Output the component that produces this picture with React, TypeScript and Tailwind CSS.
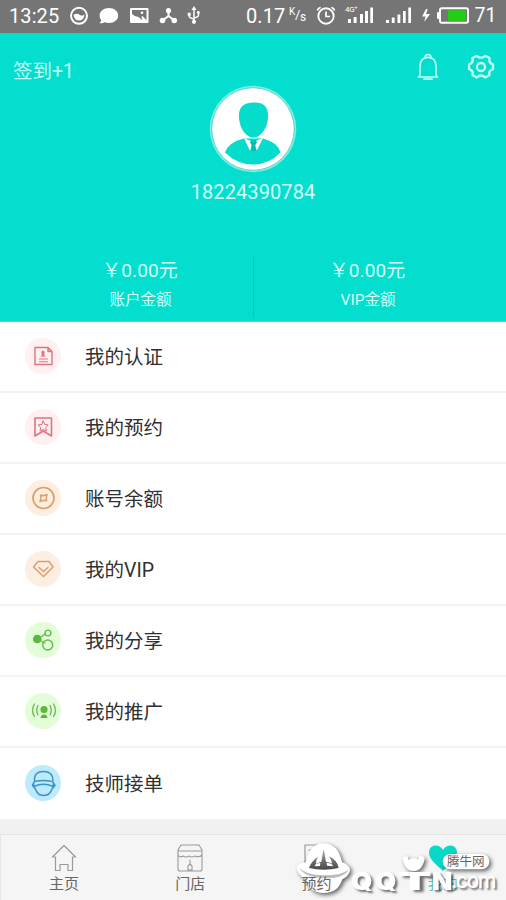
import React from "react";

type IconProps = { children: React.ReactNode; w?: number; h?: number; className?: string };

function Draw({ children, w = 36, h = 36, className = "" }: IconProps) {
  return (
    <svg
      width={w}
      height={h}
      viewBox={`0 0 ${w} ${h}`}
      fill="none"
      stroke="currentColor"
      strokeLinecap="round"
      strokeLinejoin="round"
      className={`block shrink-0 ${className}`}
    >
      {children}
    </svg>
  );
}

function StatusBar() {
  return (
    <div className="relative h-[33px] bg-[#757575] text-white">
      <span className="absolute left-[9px] top-[4px] text-[20px] leading-[24px] tracking-[0.1px]">13:25</span>
      <svg className="absolute inset-0" width="506" height="33" viewBox="0 0 506 33" fill="none" stroke="#fff">
        <circle cx="79" cy="15.8" r="8" strokeWidth="2" />
        <path d="M73.500 15 Q76.500 12.500 80 15 Q82.500 16.500 84.500 14.500 Q84 20.500 79 20.500 Q74.500 20.500 73.500 15Z" fill="#fff" stroke="none" />
        <path d="M109 8 c5.200 0 9.200 3.200 9.200 7.500 s-4 7.500 -9.200 7.500 c-1.500 0 -3 -.2 -4.200 -.8 c-1.500 1 -3.500 1.200 -5.300 .8 c1.200 -1 1.700 -2 1.600 -3 c-1 -1.300 -1.500 -2.800 -1.500 -4.500 c0 -4.300 4.200 -7.500 9.400 -7.500Z" fill="#fff" stroke="none" />
        <path fillRule="evenodd" d="M131 8H147.500Q148.500 8 148.500 9V22Q148.500 23 147.500 23H131Q130 23 130 22V9Q130 8 131 8ZM132 10H146.500V20L143 16.500L141.500 16L142 20L138.500 17Q135 17 132 14Z" fill="#fff" stroke="none" />
        <circle cx="142" cy="12.800" r="1.300" fill="#fff" stroke="none" />
        <path d="M168.500 10V16L162.500 20.500M168.500 16L174.500 20.500" strokeWidth="2" />
        <g fill="#fff" stroke="none">
          <circle cx="168.500" cy="10.500" r="2.600" /><circle cx="162.500" cy="20.500" r="2.800" /><circle cx="174.300" cy="20.500" r="2.800" />
          <path d="M194 6l2.500 4h-5zM187.700 12.800h3v3h-3z" /><circle cx="194" cy="21.800" r="2.100" /><circle cx="198.300" cy="12.500" r="1.400" />
        </g>
        <path d="M194 9V22M189.200 15V16Q189.200 18 194 19M198.500 13V15Q198.500 17 194 18" strokeWidth="1.500" />
        <circle cx="326" cy="16" r="7.700" strokeWidth="1.900" />
        <path d="M326 11.500V16.500H330M317.500 10.500Q318 8 320.700 7.500M331.300 7.500Q334 8 334.500 10.500" strokeWidth="1.700" />
        <g fill="#fff" stroke="none">
          <path d="M348 19h3v4h-3zM353.600 17h3v6h-3zM360 14h3v9h-3zM365 11h3v12h-3zM370.300 7.500h2.700v15.500h-2.700z" />
          <path d="M386 20h3v3h-3zM391.800 17.500h2.800v5.500h-2.800zM397.500 14.500h2.800v8.500h-2.800zM403 11h2.700v12h-2.700zM408.300 7.500h2.700v15.500h-2.700z" />
          <path d="M426 9l-4 7.500h3.600l-1.500 5.500 6-8h-4l1.500-5z" />
          <rect x="437" y="12" width="3" height="7" rx="1" />
        </g>
        <rect x="440" y="8.300" width="28" height="14.500" rx="1.800" strokeWidth="1.900" />
        <rect x="448" y="10.300" width="18" height="10.500" fill="#20d010" stroke="none" />
      </svg>
      <span className="absolute left-[246px] top-[4px] text-[20px] leading-[24px] tracking-[0.1px]">0.17</span>
      <span className="absolute left-[289px] top-[6px] text-[10px] leading-[12px]">K</span>
      <span className="absolute left-[295px] top-[8px] text-[13px] leading-[14px]">/</span>
      <span className="absolute left-[300px] top-[10px] text-[12px] leading-[14px]">s</span>
      <span className="absolute left-[345px] top-[5px] text-[8px] leading-[10px] tracking-[-0.3px]">4G⁺</span>
      <span className="absolute left-[474.500px] top-[4px] text-[19.500px] leading-[24px]">71</span>
    </div>
  );
}

function Avatar() {
  return (
    <Draw w={88} h={88} className="mx-auto">
      <circle cx="44" cy="44" r="43.300" fill="#7cefe4" stroke="none" />
      <circle cx="44" cy="44" r="41.300" fill="#fff" stroke="#4bcabd" strokeWidth=".8" />
      <g fill="#05dccc" stroke="none">
        <path d="M44.500 17.500C54.500 17 59.500 22 59 31.500C59 42 52.500 52.500 44.500 52.500S30 42 30 31.500C29.500 23 34 17.500 44.500 17.500Z" />
        <path d="M34.500 53.500Q19 57.500 16 67.500Q28 79.500 44 79.500Q60 79.500 71.500 67.500Q69 57.500 54 53.500Z" />
      </g>
      <path d="M35 53L44 57 54 53 48 65 44.500 66 40.500 65Z" fill="#fff" stroke="none" />
      <path d="M42 55.500H47L48 57.500 46.300 60 47.500 66H41.300L42.600 60 41 57.500Z" fill="#05bfb1" stroke="none" />
    </Draw>
  );
}

function Balance({ label }: { label: string }) {
  return (
    <div className="flex flex-1 flex-col items-center text-[#d6fffa]">
      <span className="mt-px h-7 pr-[1px] text-[19px] leading-7 tracking-[0.15px] whitespace-nowrap">￥0.00元</span>
      <span className="mt-[3px] text-[15.500px] leading-6">{label}</span>
    </div>
  );
}

function Header() {
  return (
    <header className="relative h-[289px] border-b border-[#4fdccf] bg-[#04dece]">
      <div className="flex h-[52px] items-start justify-between pl-[13px] pr-[11px] pt-[19px] text-[#c6fff8]">
        <span className="mt-[6px] text-[19.500px] leading-7">签到+1</span>
        <div className="flex gap-[28px]">
          <Draw w={22} h={30}>
            <path d="M3 23.500V14.500C3 8.500 6 5.300 11 5.300S19 8.500 19 14.500V23.500L20.500 25H1.500L3 23.500ZM8 5.700Q8 2.500 11 2.500T14 5.700M7 27.200H15" strokeWidth="1.700" />
          </Draw>
          <Draw w={28} h={30}>
            <path d="M9.800 3.800Q14 7.500 18.200 3.800L22.500 6Q21.500 11.300 26 12.300V17.200Q21.300 18.800 22.500 23L18.300 25.500Q14 21.500 9.700 25.500L5.500 23Q6.700 18.500 2 17.200V12.300Q6.500 11.300 5.500 6Z" strokeWidth="2.300" />
            <circle cx="14" cy="15" r="4" strokeWidth="2.300" />
          </Draw>
        </div>
      </div>
      <Avatar />
      <div className="mt-[5px] text-center text-[20px] leading-7 tracking-[0.1px] text-[#d6fffa]">18224390784</div>
      <div className="mt-[50px] flex">
        <div className="flex w-[254px] shrink-0 border-r-[1.500px] border-[#5ba29b] pl-[28px] h-[62px]"><Balance label="账户金额" /></div>
        <div className="flex w-[252px] pr-[24px]"><Balance label="VIP金额" /></div>
      </div>
    </header>
  );
}

const rows = [
  {
    label: "我的认证", tone: "bg-[#fff0f2] text-[#df737d]",
    icon: <><path d="M10 9.500H23L27 13.500V26.500H10ZM23 9.500V13.500H27" strokeWidth="1.400" /><path d="M15 18.500Q17 17.500 16.800 16.500Q15.500 13 18 12.500Q20.500 13 19.200 16.500Q19 17.500 21.500 18.500Z" fill="currentColor" stroke="none" /><path d="M14.500 21H22.500M14.500 23.700H22.500" strokeWidth="1.100" /></>,
  },
  {
    label: "我的预约", tone: "bg-[#fff0f2] text-[#df737d]",
    icon: <><path d="M10 9H26.500V27L18.300 22 10 27Z" strokeWidth="1.600" /><path d="M18.200 12L19.800 15.400 23.200 15.900 20.700 18.500 21.400 22 18.200 20.400 15 22 15.700 18.500 13 15.900 16.600 15.400Z" strokeWidth="1" /></>,
  },
  {
    label: "账号余额", tone: "bg-[#fdeee2] text-[#df9d68]",
    icon: <><circle cx="18.500" cy="18" r="10.500" strokeWidth="1.700" /><path d="M15.500 15L18.500 15.800 22 14.500 21.200 18 21.600 20.800 18.500 20.300 15 21.500 16 18Z" strokeWidth="1.500" /></>,
  },
  {
    label: "我的VIP", tone: "bg-[#fdeee2] text-[#df9d68]",
    icon: <><path d="M13 10.500H24L28 16 18.500 25.500 8.500 16Z" strokeWidth="1.500" /><path d="M14 16.500L18.500 20.500 23 16.500" strokeWidth="1.500" /></>,
  },
  {
    label: "我的分享", tone: "bg-[#e2fdd8] text-[#68b950]",
    icon: <><circle cx="12.300" cy="17" r="4.300" fill="#58b93a" stroke="none" /><path d="M14 16.500L20 12M14 18L20 21" strokeWidth="1.300" /><circle cx="23" cy="11" r="2.900" strokeWidth="1.400" /><circle cx="22.700" cy="23" r="5" strokeWidth="1.500" /></>,
  },
  {
    label: "我的推广", tone: "bg-[#e2fdd8] text-[#68b950]",
    icon: <><circle cx="19" cy="16.500" r="3.600" fill="#58b93a" stroke="none" /><path d="M15.500 25Q16 21.500 19 21.500T22.500 25Z" fill="#58b93a" stroke="none" /><path d="M13 12.500Q10.500 17.500 13 22M9.500 11Q5.500 17.500 9.500 23.500M25 12.500Q27.500 17.500 25 22M28.500 11Q32.500 17.500 28.500 23.500" strokeWidth="1.300" /></>,
  },
  {
    label: "技师接单", tone: "bg-[#bdeafd] text-[#3c94c4]",
    icon: <><path d="M9.500 15.500Q9 6.500 18.500 6.500T28 15.500M8.500 18Q9 15.500 18.500 15.500T28.500 18L28 21.500Q18.500 17 9 21.500ZM8.500 18L7.500 20.500 10.500 24C12 29 15 30.500 18.500 30.500S25.500 29 27 24L30 20.500 28.500 18" strokeWidth="1.500" /></>,
  },
];

function Menu() {
  return (
    <main className="grid h-[497px] grid-rows-7 bg-white">
      {rows.map((row, i) => (
        <div key={row.label} className={`flex items-center pl-[25px] ${i < 6 ? "border-b-2 border-[#f3f3f3] pb-px" : "pb-[2px]"}`}>
          <div className={`h-9 w-9 rounded-full ${row.tone}`}><Draw>{row.icon}</Draw></div>
          <span className="ml-6 mt-[4px] text-[19.500px] leading-7 text-[#303030]">{row.label}</span>
        </div>
      ))}
    </main>
  );
}

type NavProps = { label: string; active?: boolean; raised?: boolean; children: React.ReactNode };

function NavItem({ label, active, raised, children }: NavProps) {
  return (
    <div className={`flex flex-1 flex-col items-center pt-[7px] ${active ? "text-[#08d8c5]" : "text-[#999]"}`}>
      <Draw w={30} h={31}>{children}</Draw>
      <span className={`text-[15px] leading-[22px] ${active ? "text-[#5fbfb4]" : "text-[#666]"} ${raised ? "relative z-10" : ""}`}>{label}</span>
    </div>
  );
}

function Watermark() {
  return (
    <div className="absolute left-[290px] top-[835px] h-[65px] w-[216px] text-white">
      <svg className="absolute inset-0 drop-shadow-[2px_2px_2px_rgba(0,0,0,0.6)]" width="216" height="65" viewBox="0 0 648 195">
        <defs>
          <linearGradient id="horn" x1="0" x2="0" y1="0" y2="1">
            <stop offset="0" stopColor="#a8a8a8" />
            <stop offset="1" stopColor="#484848" />
          </linearGradient>
        </defs>
        <path d="M48 82Q58 25 101 25T156 82Q180 90 180 107Q176 123 157 133Q145 174 101 174T48 133Q20 117 20 98Q24 83 48 82Z" fill="#fff" />
        <path d="M101 42L108 80 126 85Q124 73 117 64Q143 76 146 99Q124 104 101 104T57 99Q64 78 84 65Q77 76 78 86L94 80Z" fill="url(#horn)" />
        <path d="M78 86L91 84 90 93 74 94ZM110 83L124 86 130 94 111 92Z" fill="#fff" />
        <path d="M27 96Q40 118 101 121Q157 121 175 104Q165 130 101 130Q38 126 27 96Z" fill="#bcbcbc" />
        <path d="M338 70Q344 108 371 108T404 70Q400 60 387 64Q390 78 371 82Q351 80 354 65Q342 61 338 70Z" fill="#fff" />
        <ellipse cx="371" cy="80" rx="18" ry="10" fill="#fff" />
        <rect x="458" y="57" width="140" height="46" rx="23" fill="#fff" />
      </svg>
      <div className="absolute left-[61px] top-[32px] flex font-['Inter'] text-[24.500px] leading-[28px] font-black [text-shadow:2px_2px_2px_rgba(0,0,0,0.55)]">
        <span className="inline-block w-[24px] origin-left scale-x-[1.12]">Q</span>
        <span className="inline-block w-[23px] origin-left scale-x-[1.12]">Q</span>
        <span className="inline-block w-[34px] origin-left scale-x-[2]">T</span>
        <span className="inline-block w-[20px] origin-left scale-x-[1.08]">N</span>
      </div>
      <span className="absolute left-[161px] top-[33px] font-['Inter'] text-[21px] leading-[26px] font-medium tracking-[-1.500px] [text-shadow:2px_2px_2px_rgba(0,0,0,0.55)]">.com</span>
      <span className="absolute left-[157px] top-[18px] text-[12.500px] leading-[18px] text-[#666]">腾牛网</span>
    </div>
  );
}

export default function App() {
  return (
    <div className="relative h-[900px] w-[506px] overflow-hidden bg-[#f1f1f1] font-['Roboto','Noto_Sans_CJK_SC',sans-serif]">
      <StatusBar />
      <Header />
      <Menu />
      <nav className="mt-[15px] flex h-[66px] border-t border-l border-[#e6e6e6] bg-[#f5f5f5]">
        <NavItem label="主页"><path d="M3.500 15L15 3.500 26.500 15H23.500V28.500H19V22.500H11V28.500H6.500V15Z" strokeWidth="1.200" /></NavItem>
        <NavItem label="门店"><path d="M6 3H24L27 8V27Q27 29 25 29H5Q3 29 3 27V8ZM3 9H27M3 13Q5 16 8 14Q11 16 14 14Q17 16 20 14Q24 16 27 13M13 28V24L15 22 17 24V28ZM15 18V22" strokeWidth="1.100" /></NavItem>
        <NavItem label="预约" raised><path d="M3 3H25V28H3ZM7 8H21M7 12H19" strokeWidth="1.200" /></NavItem>
        <NavItem label="我的" active><path d="M15 29C9 23 1 18 1 10.500C1 1.500 12 1.500 15 8C18 1.500 29 1.500 29 10.500C29 18 21 23 15 29Z" fill="currentColor" stroke="none" /></NavItem>
      </nav>
      <Watermark />
    </div>
  );
}
